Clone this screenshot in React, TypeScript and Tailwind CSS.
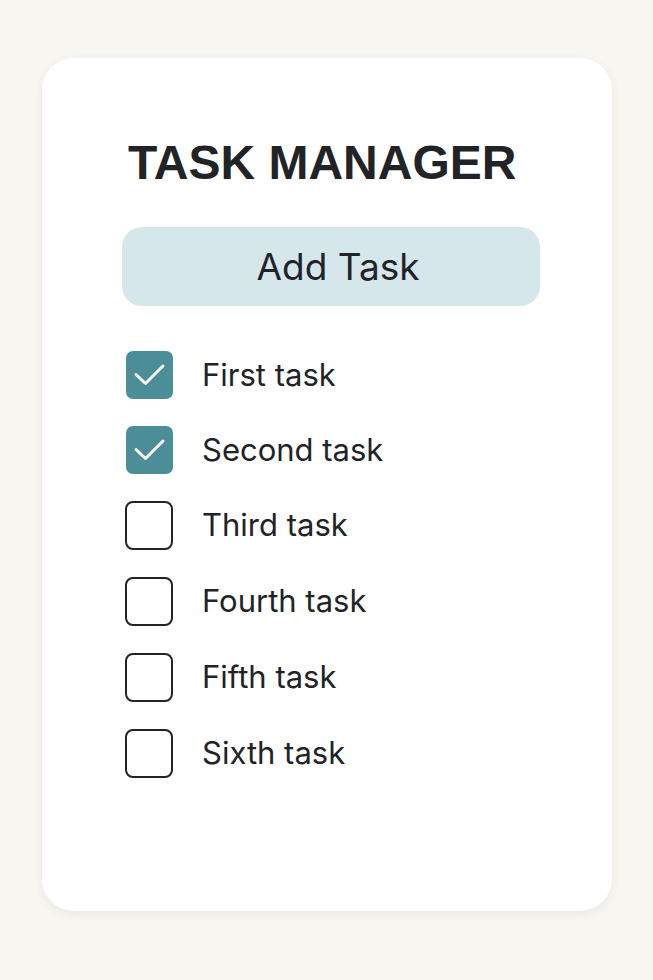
import React from "react"

const tasks = [
  { label: "First task", done: true },
  { label: "Second task", done: true },
  { label: "Third task", done: false },
  { label: "Fourth task", done: false },
  { label: "Fifth task", done: false },
  { label: "Sixth task", done: false },
]

function Checkbox({ checked }: { checked: boolean }) {
  if (checked) {
    return (
      <div className="w-[47px] h-[48px] rounded-[7px] bg-[#4b8e98] flex items-center justify-center shrink-0">
        <svg width="47" height="48" viewBox="0 0 47 48" fill="none">
          <polyline
            points="10,23.5 19.5,32.5 37,15"
            stroke="white"
            strokeWidth="3"
            strokeLinecap="round"
            strokeLinejoin="round"
          />
        </svg>
      </div>
    )
  }
  return <div className="w-[48px] h-[49px] rounded-[8px] border-2 border-[#222428] bg-white shrink-0 -ml-[1px]" />
}

export default function App() {
  return (
    <div className="min-h-[980px] w-full bg-[#f7f6f1] pt-[58px] pl-[42px]" style={{ fontFamily: "Inter, 'Liberation Sans', sans-serif" }}>
      <div className="w-[570px] h-[853px] bg-white rounded-[32px] shadow-[0_3px_10px_rgba(60,50,20,0.07)] pl-[80px] pt-[81px]">
        <h1 className="ml-[6px] text-[48px] leading-[48px] font-bold text-[#212327] font-['Liberation_Sans',sans-serif]">
          TASK MANAGER
        </h1>
        <button className="mt-[40px] w-[418px] h-[79px] rounded-[20px] bg-[#d6e7ec] text-[37px] text-[#1f2428] flex items-center justify-center pl-[14px]">
          Add Task
        </button>
        <div className="mt-[45px] flex flex-col gap-[27px]">
          {tasks.map((t) => (
            <div key={t.label} className="flex items-center pl-[4px]">
              <Checkbox checked={t.done} />
              <span className="ml-[29px] text-[31px] leading-none text-[#212327] -mt-[2px]">{t.label}</span>
            </div>
          ))}
        </div>
      </div>
    </div>
  )
}
